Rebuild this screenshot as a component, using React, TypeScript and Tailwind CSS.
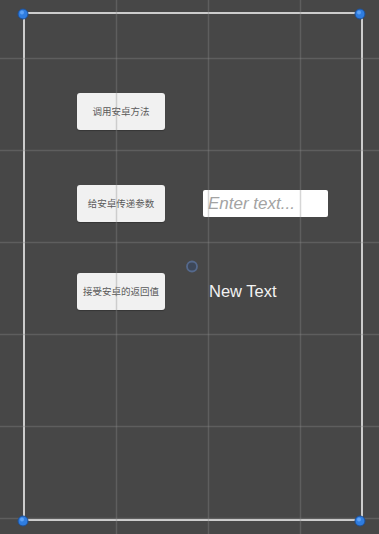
import React from 'react';

const gridX = [116, 208, 300];
const gridY = [58, 150, 242, 334, 426, 518];
const handles: [number, number][] = [
  [23, 14],
  [360, 14],
  [23, 521],
  [360, 521],
];

const SceneButton: React.FC<{ label: string }> = ({ label }) => (
  <button className="w-[88px] h-[37px] shrink-0 rounded-[3px] bg-[#f1f1f1] text-[#5a5a5a] text-[9.5px] leading-none font-['Noto_Sans_CJK_SC',sans-serif] shadow-[0_1px_1px_rgba(0,0,0,0.25)]">
    {label}
  </button>
);

const App: React.FC = () => {
  return (
    <div className="relative w-[379px] h-[534px] bg-[#474747] overflow-hidden font-['Liberation_Sans',Arial,sans-serif]">
      <div className="ml-[23px] mt-[12px] w-[340px] h-[509px] border-2 border-[#cdcdcd]">
        <div className="flex flex-col pl-[52px] pt-[79px]">
          <SceneButton label="调用安卓方法" />

          <div className="flex items-start mt-[55px]">
            <SceneButton label="给安卓传递参数" />
            <div className="ml-[38px] mt-[5px] w-[125px] h-[27px] rounded-[2px] bg-white flex items-center pl-[5px]">
              <span className="italic text-[17px] leading-none text-[#a3a3a3]">Enter text...</span>
            </div>
          </div>

          <div className="flex items-center mt-[51px]">
            <SceneButton label="接受安卓的返回值" />
            <span className="ml-[44px] text-[16.5px] leading-none text-[#f2f2f2]">New Text</span>
          </div>
        </div>
      </div>

      {/* scene overlay: grid, pivot, rect handles */}
      <svg className="absolute inset-0 pointer-events-none" width="379" height="534" viewBox="0 0 379 534">
        {gridX.map((x) => (
          <line key={'x' + x} x1={x + 0.5} y1={0} x2={x + 0.5} y2={534} stroke="#8a8a8a" strokeOpacity={0.35} strokeWidth={1.5} />
        ))}
        {gridY.map((y) => (
          <line key={'y' + y} x1={0} y1={y + 0.5} x2={379} y2={y + 0.5} stroke="#8a8a8a" strokeOpacity={0.35} strokeWidth={1.5} />
        ))}
        <circle cx={192} cy={266.5} r={5} fill="#3d4758" stroke="#55698c" strokeWidth={1.8} />
        {handles.map(([x, y]) => (
          <g key={x + '-' + y}>
            <circle cx={x} cy={y} r={5} fill="#2f7de0" stroke="#1d4f96" strokeWidth={1} />
            <circle cx={x - 1} cy={y - 1.5} r={2} fill="#6fb0ff" opacity={0.7} />
          </g>
        ))}
      </svg>
    </div>
  );
};

export default App;
